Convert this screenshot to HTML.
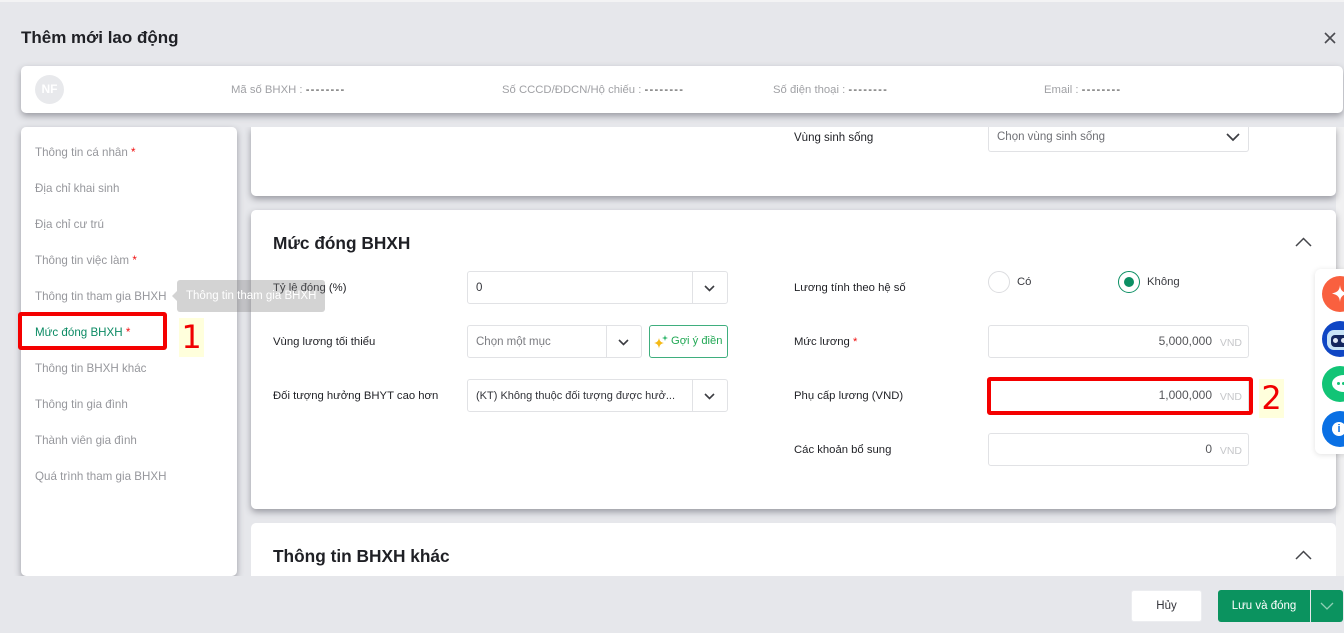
<!DOCTYPE html>
<html lang="vi"><head><meta charset="utf-8">
<style>
html,body{margin:0;padding:0}
body{width:1344px;height:633px;overflow:hidden;position:relative;background:#e6e7eb;font-family:"Liberation Sans","Noto Sans CJK SC",sans-serif;font-size:12px;color:#1f2025}
.a{position:absolute;white-space:nowrap}
.card{position:absolute;background:#fff;border-radius:5px;box-shadow:0 3px 7px rgba(60,60,70,.45)}
.nav{position:absolute;left:35px;color:#96979c;font-size:11.6px;line-height:14px;white-space:nowrap}
.s{color:#f01010}
.lb{position:absolute;font-size:11.3px;line-height:14px;color:#1f2025;white-space:nowrap}
.in{position:absolute;box-sizing:border-box;background:#fff;border:1px solid #e1e2e5;border-radius:3px;height:33px;font-size:11.5px;line-height:32px;white-space:nowrap}
.in .t{position:absolute;left:8px;top:0}
.in .sep{position:absolute;top:0;bottom:0;width:1px;background:#e1e2e5}
.in .r{position:absolute;right:36px;top:-1px;color:#55565a;font-size:12px}
.in .v{position:absolute;right:6px;top:1px;color:#c6c7ca;font-size:10.5px}
.h{position:absolute;font-size:17.3px;font-weight:bold;color:#1f2025;line-height:20px;white-space:nowrap}
.top{color:#a0a1a5;font-size:11.3px;line-height:14px;position:absolute;top:83px;white-space:nowrap}
.top b{font-weight:normal;color:#222;letter-spacing:1.2px}
svg{position:absolute;overflow:visible}
.num{position:absolute;background:#ffffdc;color:#f00000;font-size:32px;line-height:39px;text-align:center;font-family:"DejaVu Sans","Liberation Sans",sans-serif;font-weight:normal}
.rb{position:absolute;box-sizing:border-box;border:4px solid #f40000;border-radius:3px}
.fi{position:absolute;left:1322px;width:36px;height:36px;border-radius:50%}
</style></head><body>
<div class="a" style="left:0;top:0;width:1344px;height:2px;background:#f3f3f4"></div>
<div class="a" style="left:21px;top:27px;font-size:17px;font-weight:bold;line-height:22px;color:#1f2025">Thêm mới lao động</div>
<svg style="left:1324px;top:32px" width="12" height="12" viewBox="0 0 12 12"><path d="M1 1L11 11M11 1L1 11" stroke="#4a4b50" stroke-width="1.6" fill="none"/></svg>

<div class="card" style="left:21px;top:66px;width:1322px;height:47px"></div>
<div class="a" style="left:35px;top:75px;width:29px;height:29px;border-radius:50%;background:#e8e9ec;color:#fff;font-size:12px;line-height:29px;text-align:center;font-weight:bold">NF</div>
<div class="top" style="left:231px">Mã số BHXH : <b>--------</b></div>
<div class="top" style="left:502px">Số CCCD/ĐDCN/Hộ chiếu : <b>--------</b></div>
<div class="top" style="left:773px">Số điện thoại : <b>--------</b></div>
<div class="top" style="left:1044px">Email : <b>--------</b></div>

<div class="a" style="left:1336px;top:127px;width:8px;height:449px;background:#f1f1f2"></div>
<div class="a" style="left:238px;top:127px;width:13px;height:449px;background:#e6e7eb"></div>

<div class="card" style="left:21px;top:127px;width:216px;height:449px"></div>
<div class="nav" style="top:146px">Thông tin cá nhân <span class="s">*</span></div>
<div class="nav" style="top:182px">Địa chỉ khai sinh</div>
<div class="nav" style="top:218px">Địa chỉ cư trú</div>
<div class="nav" style="top:254px">Thông tin việc làm <span class="s">*</span></div>
<div class="nav" style="top:290px">Thông tin tham gia BHXH</div>
<div class="nav" style="top:326px;color:#0b8a63">Mức đóng BHXH <span class="s">*</span></div>
<div class="nav" style="top:362px">Thông tin BHXH khác</div>
<div class="nav" style="top:398px">Thông tin gia đình</div>
<div class="nav" style="top:434px">Thành viên gia đình</div>
<div class="nav" style="top:470px">Quá trình tham gia BHXH</div>

<!-- content cards -->
<div class="a" style="left:251px;top:127px;width:1085px;height:69px;background:#fff;border-radius:0 0 5px 5px;box-shadow:0 3px 7px rgba(60,60,70,.45);clip-path:inset(0 -10px -12px -10px)"></div>
<div class="card" style="left:251px;top:210px;width:1085px;height:299px"></div>
<div class="a" style="left:251px;top:523px;width:1085px;height:53px;background:#fff;border-radius:5px 5px 0 0"></div>
<div class="a" style="left:0;top:576px;width:1344px;height:57px;background:#e6e7eb"></div>

<div class="lb" style="left:794px;top:131px;font-size:11.5px">Vùng sinh sống</div>
<div class="in" style="left:988px;top:127px;width:261px;border-top:none;border-radius:0 0 3px 3px;height:25px"><span class="t" style="top:-6px;color:#6f7075">Chọn vùng sinh sống</span>
<svg style="left:237px;top:6px" width="14" height="8" viewBox="0 0 14 8"><path d="M1 1L7 7L13 1" stroke="#3c3d42" stroke-width="1.7" fill="none"/></svg></div>

<div class="h" style="left:273px;top:233px">Mức đóng BHXH</div>
<svg style="left:1295px;top:237px" width="17" height="10" viewBox="0 0 17 10"><path d="M1 9L8.5 1.5L16 9" stroke="#45464b" stroke-width="1.5" fill="none"/></svg>

<div class="lb" style="left:273px;top:281px">Tỷ lệ đóng (%)</div>
<div class="in" style="left:467px;top:271px;width:261px"><span class="t" style="color:#33343a">0</span><span class="sep" style="left:224px"></span>
<svg style="left:236px;top:13px" width="11" height="7" viewBox="0 0 11 7"><path d="M1 1L5.5 5.5L10 1" stroke="#3c3d42" stroke-width="1.6" fill="none"/></svg></div>

<div class="lb" style="left:273px;top:335px">Vùng lương tối thiểu</div>
<div class="in" style="left:467px;top:325px;width:175px"><span class="t" style="color:#7b7c81">Chọn một mục</span><span class="sep" style="left:138px"></span>
<svg style="left:150px;top:13px" width="11" height="7" viewBox="0 0 11 7"><path d="M1 1L5.5 5.5L10 1" stroke="#3c3d42" stroke-width="1.6" fill="none"/></svg></div>
<div class="a" style="left:649px;top:325px;width:79px;height:33px;box-sizing:border-box;border:1px solid #3fae7e;border-radius:3px;background:#fff;color:#22a855;font-size:11.2px;line-height:31px;padding-left:21px">Gợi ý điền</div>
<svg style="left:654px;top:335px" width="14" height="14" viewBox="0 0 14 14"><path d="M5 3C5.6 6 6.8 7.4 10 8C6.8 8.6 5.6 10 5 13.500C4.400 10 3.200 8.600 0 8C3.200 7.400 4.400 6 5 3Z" fill="#f5b916"/><path d="M11 0L11.700 2.300L14 3L11.700 3.700L11 6L10.300 3.700L8 3L10.300 2.300Z" fill="#2db56a"/></svg>

<div class="lb" style="left:273px;top:389px">Đối tượng hưởng BHYT cao hơn</div>
<div class="in" style="left:467px;top:379px;width:261px"><span class="t" style="color:#33343a;font-size:11px">(KT) Không thuộc đối tượng được hưở...</span><span class="sep" style="left:224px"></span>
<svg style="left:236px;top:13px" width="11" height="7" viewBox="0 0 11 7"><path d="M1 1L5.5 5.5L10 1" stroke="#3c3d42" stroke-width="1.6" fill="none"/></svg></div>

<div class="lb" style="left:794px;top:281px">Lương tính theo hệ số</div>
<div class="a" style="left:988px;top:271px;width:22px;height:22px;box-sizing:border-box;border:1px solid #dcdde0;border-radius:50%;background:#fff"></div>
<div class="lb" style="left:1017px;top:275px;color:#3a3b40">Có</div>
<div class="a" style="left:1118px;top:271px;width:22px;height:22px;box-sizing:border-box;border:1px solid #0b8f63;border-radius:50%;background:#fff"></div>
<div class="a" style="left:1124px;top:277px;width:10px;height:10px;border-radius:50%;background:#0b8f63"></div>
<div class="lb" style="left:1147px;top:275px;color:#3a3b40">Không</div>

<div class="lb" style="left:794px;top:335px">Mức lương <span class="s">*</span></div>
<div class="in" style="left:988px;top:325px;width:261px"><span class="r">5,000,000</span><span class="v">VND</span></div>
<div class="lb" style="left:794px;top:389px">Phụ cấp lương (VND)</div>
<div class="in" style="left:988px;top:379px;width:261px"><span class="r">1,000,000</span><span class="v">VND</span></div>
<div class="lb" style="left:794px;top:443px">Các khoản bổ sung</div>
<div class="in" style="left:988px;top:433px;width:261px"><span class="r">0</span><span class="v">VND</span></div>

<div class="h" style="left:273px;top:546px">Thông tin BHXH khác</div>
<svg style="left:1295px;top:550px" width="17" height="10" viewBox="0 0 17 10"><path d="M1 9L8.5 1.5L16 9" stroke="#45464b" stroke-width="1.5" fill="none"/></svg>

<!-- tooltip -->
<div class="a" style="left:177px;top:280px;width:148px;height:32px;background:rgba(130,130,130,.35);border-radius:3px;color:#fff;font-size:11.5px;line-height:32px;text-indent:9px">Thông tin tham gia BHXH</div>
<div class="a" style="left:172px;top:291px;width:0;height:0;border:5px solid transparent;border-left:0;border-right-color:rgba(130,130,130,.35)"></div>

<!-- annotations -->
<div class="rb" style="left:18px;top:312px;width:149px;height:38px"></div>
<div class="num" style="left:179px;top:318px;width:25px;height:39px">1</div>
<div class="rb" style="left:987px;top:377px;width:266px;height:38px"></div>
<div class="num" style="left:1259px;top:379px;width:25px;height:39px">2</div>

<!-- floating -->
<div class="a" style="left:1315px;top:269px;width:40px;height:185px;background:#fff;border-radius:6px;box-shadow:0 1px 6px rgba(0,0,0,.12)"></div>
<div class="fi" style="top:276px;background:#f9603f"></div>
<svg style="left:1332px;top:285px" width="16" height="17" viewBox="0 0 16 17"><path d="M8 0C8.500 5 10 7 16 8.500C10 10 8.500 12 8 17C7.500 12 6 10 0 8.500C6 7 7.500 5 8 0Z" fill="#fff"/></svg>
<div class="fi" style="top:321px;background:#0f46c4"></div>
<div class="a" style="left:1327px;top:330px;width:30px;height:20px;border-radius:7px;background:#c9e4f7"></div>
<div class="a" style="left:1331px;top:335px;width:26px;height:12px;border-radius:4px;background:#14265e"></div>
<div class="a" style="left:1333px;top:338px;width:5px;height:5px;border-radius:50%;background:#dfe8f5"></div>
<div class="a" style="left:1341px;top:338px;width:5px;height:5px;border-radius:50%;background:#dfe8f5"></div>
<div class="fi" style="top:366px;background:#12c476"></div>
<div class="a" style="left:1332px;top:375px;width:24px;height:17px;border-radius:50%;background:#fff"></div>
<div class="a" style="left:1337px;top:382px;width:3px;height:3px;border-radius:50%;background:#12c476"></div>
<div class="a" style="left:1342px;top:382px;width:3px;height:3px;border-radius:50%;background:#12c476"></div>
<div class="fi" style="top:411px;background:#0a70e4"></div>
<div class="a" style="left:1332px;top:422px;width:14px;height:14px;border-radius:50%;background:#fff;color:#0a70e4;text-align:center;font-weight:bold;font-size:11px;line-height:14px">i</div>

<!-- footer -->
<div class="a" style="left:1131px;top:590px;width:71px;height:32px;background:#fff;border-radius:3px;border:1px solid #ecedf0;box-sizing:border-box;text-align:center;line-height:30px;font-size:11.5px;color:#33343a">Hủy</div>
<div class="a" style="left:1218px;top:590px;width:92px;height:32px;background:#0b935f;border-radius:3px 0 0 3px;color:#fff;text-align:center;font-size:11.5px;line-height:32px">Lưu và đóng</div>
<div class="a" style="left:1311px;top:590px;width:32px;height:32px;background:#0b935f;border-radius:0 3px 3px 0"></div>
<svg style="left:1320px;top:602px" width="14" height="8" viewBox="0 0 14 8"><path d="M1 1L7 7L13 1" stroke="#8fd0b5" stroke-width="1.300" fill="none"/></svg>
</body></html>
